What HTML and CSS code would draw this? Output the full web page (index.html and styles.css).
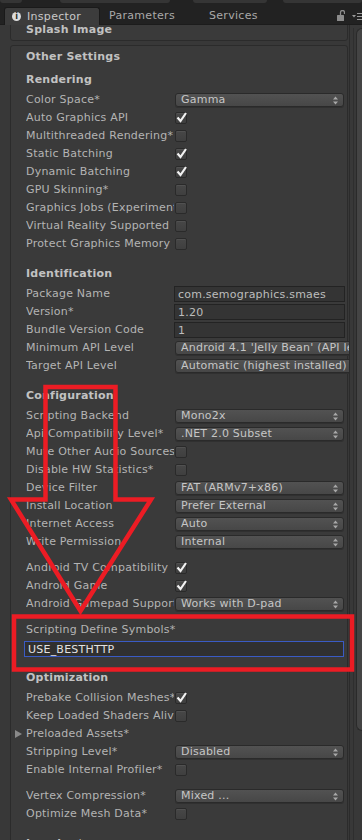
FILE: index.html
```html
<!DOCTYPE html>
<html>
<head>
<meta charset="utf-8">
<link rel="stylesheet" href="styles.css">
</head>
<body>
<div class="window">
  <div class="topbar">
    <div class="strip">
      <span class="piece p1"></span><span class="piece p2"></span><span class="piece p3"></span><span class="piece p4"></span>
    </div>
    <div class="tabs">
      <div class="tab active"><span class="info">i</span>Inspector</div>
      <div class="tab">Parameters</div>
      <div class="tab">Services</div>
      <div class="tools">
        <svg class="lock" width="8" height="11" viewBox="0 0 8 11"><path d="M3.5 5V2.5a2 2 0 0 1 4 0V4" fill="none" stroke="#8c8c8c" stroke-width="1.3"/><rect x="0" y="5" width="7" height="6" rx="0.5" fill="#8c8c8c"/></svg>
        <svg class="menu" width="10" height="7" viewBox="0 0 10 7"><path d="M0 2h4L2 4.5z" fill="#9a9a9a"/><path d="M5 0.5h5M5 3.5h5M5 6.5h5" stroke="#9a9a9a" stroke-width="1"/></svg>
      </div>
    </div>
  </div>
  <div class="main">
    <div class="content">
      <div class="panel splash"><div class="panel-header">Splash Image</div></div>
      <div class="panel other">
        <div class="panel-header">Other Settings</div>
        <div class="panel-body">
          <div class="section">
            <div class="heading">Rendering</div>
            <div class="row"><span class="label">Color Space*</span><div class="popup"><span class="ptext">Gamma</span><svg class="arr" width="5" height="9" viewBox="0 0 5 9"><path d="M0 3.5L2.5 0.5 5 3.5zM0 5.5h5L2.5 8.5z" fill="#a8a8a8"/></svg></div></div>
            <div class="row"><span class="label">Auto Graphics API</span><span class="check on"><svg width="12" height="12" viewBox="0 0 12 12"><path d="M2.5 5.5l3 3.5 5.5-8" fill="none" stroke="#f2f2f2" stroke-width="2.2"/></svg></span></div>
            <div class="row"><span class="label">Multithreaded Rendering*</span><span class="check"></span></div>
            <div class="row"><span class="label">Static Batching</span><span class="check on"><svg width="12" height="12" viewBox="0 0 12 12"><path d="M2.5 5.5l3 3.5 5.5-8" fill="none" stroke="#f2f2f2" stroke-width="2.2"/></svg></span></div>
            <div class="row"><span class="label">Dynamic Batching</span><span class="check on"><svg width="12" height="12" viewBox="0 0 12 12"><path d="M2.5 5.5l3 3.5 5.5-8" fill="none" stroke="#f2f2f2" stroke-width="2.2"/></svg></span></div>
            <div class="row"><span class="label">GPU Skinning*</span><span class="check"></span></div>
            <div class="row"><span class="label">Graphics Jobs (Experimental)</span><span class="check"></span></div>
            <div class="row"><span class="label">Virtual Reality Supported</span><span class="check"></span></div>
            <div class="row"><span class="label">Protect Graphics Memory</span><span class="check"></span></div>
          </div>
          <div class="section">
            <div class="heading">Identification</div>
            <div class="row"><span class="label">Package Name</span><div class="tfield">com.semographics.smaes</div></div>
            <div class="row"><span class="label">Version*</span><div class="tfield">1.20</div></div>
            <div class="row"><span class="label">Bundle Version Code</span><div class="tfield">1</div></div>
            <div class="row"><span class="label">Minimum API Level</span><div class="popup"><span class="ptext">Android 4.1 'Jelly Bean' (API level 16)</span><svg class="arr" width="5" height="9" viewBox="0 0 5 9"><path d="M0 3.5L2.5 0.5 5 3.5zM0 5.5h5L2.5 8.5z" fill="#a8a8a8"/></svg></div></div>
            <div class="row"><span class="label">Target API Level</span><div class="popup"><span class="ptext">Automatic (highest installed)</span><svg class="arr" width="5" height="9" viewBox="0 0 5 9"><path d="M0 3.5L2.5 0.5 5 3.5zM0 5.5h5L2.5 8.5z" fill="#a8a8a8"/></svg></div></div>
          </div>
          <div class="section">
            <div class="heading">Configuration</div>
            <div class="row"><span class="label">Scripting Backend</span><div class="popup"><span class="ptext">Mono2x</span><svg class="arr" width="5" height="9" viewBox="0 0 5 9"><path d="M0 3.5L2.5 0.5 5 3.5zM0 5.5h5L2.5 8.5z" fill="#a8a8a8"/></svg></div></div>
            <div class="row"><span class="label">Api Compatibility Level*</span><div class="popup"><span class="ptext">.NET 2.0 Subset</span><svg class="arr" width="5" height="9" viewBox="0 0 5 9"><path d="M0 3.5L2.5 0.5 5 3.5zM0 5.5h5L2.5 8.5z" fill="#a8a8a8"/></svg></div></div>
            <div class="row"><span class="label">Mute Other Audio Sources*</span><span class="check"></span></div>
            <div class="row"><span class="label">Disable HW Statistics*</span><span class="check"></span></div>
            <div class="row"><span class="label">Device Filter</span><div class="popup"><span class="ptext">FAT (ARMv7+x86)</span><svg class="arr" width="5" height="9" viewBox="0 0 5 9"><path d="M0 3.5L2.5 0.5 5 3.5zM0 5.5h5L2.5 8.5z" fill="#a8a8a8"/></svg></div></div>
            <div class="row"><span class="label">Install Location</span><div class="popup"><span class="ptext">Prefer External</span><svg class="arr" width="5" height="9" viewBox="0 0 5 9"><path d="M0 3.5L2.5 0.5 5 3.5zM0 5.5h5L2.5 8.5z" fill="#a8a8a8"/></svg></div></div>
            <div class="row"><span class="label">Internet Access</span><div class="popup"><span class="ptext">Auto</span><svg class="arr" width="5" height="9" viewBox="0 0 5 9"><path d="M0 3.5L2.5 0.5 5 3.5zM0 5.5h5L2.5 8.5z" fill="#a8a8a8"/></svg></div></div>
            <div class="row"><span class="label">Write Permission</span><div class="popup"><span class="ptext">Internal</span><svg class="arr" width="5" height="9" viewBox="0 0 5 9"><path d="M0 3.5L2.5 0.5 5 3.5zM0 5.5h5L2.5 8.5z" fill="#a8a8a8"/></svg></div></div>
            <div class="group">
              <div class="row"><span class="label">Android TV Compatibility</span><span class="check on"><svg width="12" height="12" viewBox="0 0 12 12"><path d="M2.5 5.5l3 3.5 5.5-8" fill="none" stroke="#f2f2f2" stroke-width="2.2"/></svg></span></div>
              <div class="row"><span class="label">Android Game</span><span class="check on"><svg width="12" height="12" viewBox="0 0 12 12"><path d="M2.5 5.5l3 3.5 5.5-8" fill="none" stroke="#f2f2f2" stroke-width="2.2"/></svg></span></div>
              <div class="row"><span class="label">Android Gamepad Support Level</span><div class="popup"><span class="ptext">Works with D-pad</span><svg class="arr" width="5" height="9" viewBox="0 0 5 9"><path d="M0 3.5L2.5 0.5 5 3.5zM0 5.5h5L2.5 8.5z" fill="#a8a8a8"/></svg></div></div>
            </div>
            <div class="group">
              <div class="row single"><span class="label wide">Scripting Define Symbols*</span></div>
              <div class="row single"><div class="deffield">USE_BESTHTTP</div></div>
            </div>
          </div>
          <div class="section">
            <div class="heading">Optimization</div>
            <div class="row"><span class="label">Prebake Collision Meshes*</span><span class="check on"><svg width="12" height="12" viewBox="0 0 12 12"><path d="M2.5 5.5l3 3.5 5.5-8" fill="none" stroke="#f2f2f2" stroke-width="2.2"/></svg></span></div>
            <div class="row"><span class="label">Keep Loaded Shaders Alive*</span><span class="check"></span></div>
            <div class="row fold"><span class="tri"></span><span class="label wide">Preloaded Assets*</span></div>
            <div class="row"><span class="label">Stripping Level*</span><div class="popup"><span class="ptext">Disabled</span><svg class="arr" width="5" height="9" viewBox="0 0 5 9"><path d="M0 3.5L2.5 0.5 5 3.5zM0 5.5h5L2.5 8.5z" fill="#a8a8a8"/></svg></div></div>
            <div class="row"><span class="label">Enable Internal Profiler*</span><span class="check"></span></div>
            <div class="group">
              <div class="row"><span class="label">Vertex Compression*</span><div class="popup"><span class="ptext">Mixed ...</span><svg class="arr" width="5" height="9" viewBox="0 0 5 9"><path d="M0 3.5L2.5 0.5 5 3.5zM0 5.5h5L2.5 8.5z" fill="#a8a8a8"/></svg></div></div>
              <div class="row"><span class="label">Optimize Mesh Data*</span><span class="check"></span></div>
            </div>
          </div>
          <div class="section">
            <div class="heading">Logging*</div>
          </div>
        </div>
      </div>
    </div>
    <div class="scrollbar"><div class="track"><div class="thumb"></div></div></div>
  </div>
</div>
<svg class="annot" width="362" height="840" viewBox="0 0 362 840">
  <polygon points="45.5,387 115.5,387 115.5,499.5 151,499.5 80.5,611 11,499.5 45.5,499.5" fill="none" stroke="#ec1c24" stroke-width="4.5" stroke-linejoin="miter"/>
  <rect x="14" y="616.5" width="338" height="53" fill="none" stroke="#ec1c24" stroke-width="4.5"/>
</svg>
</body>
</html>
```

FILE: styles.css
```css
* { box-sizing: border-box; }
html, body { margin: 0; padding: 0; }
body {
  width: 362px;
  height: 840px;
  overflow: hidden;
  position: relative;
  background: #383838;
  font-family: "DejaVu Sans", "Noto Sans", sans-serif;
  font-size: 11px;
  letter-spacing: 0.22px;
  color: #b4b4b4;
}
.window { display: flex; flex-direction: column; height: 840px; }

/* top tab bar */
.topbar { height: 25px; flex: none; background: #222222; position: relative; z-index: 2; border-bottom: 1px solid #1c1c1c; }
.strip { height: 3px; display: flex; }
.piece { height: 3px; background: #353535; border-radius: 0 0 3px 3px; }
.p1 { width: 22px; }
.p2 { width: 110px; margin-left: 38px; }
.p3 { width: 74px; margin-left: 23px; }
.p4 { width: 79px; margin-left: 16px; }
.tabs { height: 21px; display: flex; align-items: flex-end; }
.tab { height: 17px; line-height: 18px; color: #a9a9a9; white-space: nowrap; letter-spacing: 0.3px; }
.tab.active {
  margin-left: 4px; width: 96px; padding-left: 7px;
  background: #3c3c3c; color: #c9c9c9;
  border: 1px solid #1a1a1a; border-bottom: none; border-radius: 3px 3px 0 0;
  display: flex; align-items: center; gap: 6px;
  height: 18px; margin-bottom: -1px;
}
.info {
  width: 9px; height: 9px; border-radius: 50%; background: #dcdcdc; color: #2a2a2a;
  font-size: 8px; font-weight: bold; line-height: 9px; text-align: center; flex: none; letter-spacing: 0;
}
.tab:nth-child(2) { width: 100px; padding-left: 9px; }
.tab:nth-child(3) { width: 100px; padding-left: 9px; }
.tools { margin-left: auto; display: flex; align-items: flex-end; height: 21px; padding-bottom: 3px; }
.lock { margin-right: 7px; }
.menu { margin-bottom: 1px; }

/* main */
.main { flex: 1; display: flex; overflow: hidden; }
.content { width: 349px; flex: none; padding-left: 10px; overflow: hidden; }
.panel { width: 338px; background: #3a3a3a; border: 1px solid #2b2b2b; border-radius: 3px; }
.panel.splash { margin-top: -7px; }
.panel.other { margin-top: 4px; }
.panel-header { height: 21px; line-height: 22px; padding-left: 15px; font-weight: bold; color: #c1c1c1; }
.panel-body { padding: 4px 3px 0 15px; }

.section { margin-bottom: 12px; }
.heading { height: 18px; line-height: 18px; font-weight: bold; color: #c2c2c2; margin-bottom: 2px; }
.group { margin-top: 8px; }
.row { height: 18px; display: grid; grid-template-columns: 149px 1fr; align-items: center; }
.row.single { grid-template-columns: 1fr; }
.row.fold { grid-template-columns: 11px 1fr; margin-left: -11px; }
.label { white-space: nowrap; overflow: hidden; max-width: 148px; line-height: 18px; }
.label.wide { max-width: none; }
.tri {
  display: block; width: 0; height: 0;
  border-left: 7px solid #8a8a8a; border-top: 4px solid transparent; border-bottom: 4px solid transparent;
}

.popup {
  height: 14px; display: flex; align-items: center; padding: 0 5px 0 5px;
  background: linear-gradient(#525252, #474747);
  border: 1px solid #2a2a2a; border-radius: 3px;
  box-shadow: 0 1px 0 #303030;
  color: #c6c6c6; line-height: 12px;
}
.ptext { flex: 1; white-space: nowrap; overflow: hidden; }
.arr { flex: none; margin-left: 3px; }

.tfield {
  height: 16px; margin-left: -1px; width: 171px; padding-left: 3px; line-height: 15px;
  background: #343434; border: 1px solid #232323; color: #bdbdbd; white-space: nowrap; overflow: hidden;
}
.deffield {
  height: 16px; margin-left: -2px; width: 320px; padding-left: 3px; line-height: 15px; margin-top: 1px;
  background: #303030; border: 1px solid #3a5bc4; color: #e2e2e2;
}

.check {
  width: 12px; height: 12px; display: block;
  background: linear-gradient(#474747, #3f3f3f);
  border: 1px solid #2a2a2a; border-radius: 2px;
  box-shadow: inset 0 1px 0 #515151;
  position: relative;
}
.check svg { position: absolute; left: -1px; top: -1px; }

/* scrollbar */
.scrollbar { width: 13px; flex: none; border-left: 1px solid #2b2b2b; padding-left: 3px; background: #383838; }
.track { height: 100%; border-left: 1px solid #2e2e2e; padding-left: 2px; }
.thumb { margin-top: 3px; height: 703px; width: 6px; background: #444444; border: 1px solid #2a2a2a; border-right: none; border-radius: 6px 0 0 6px; }

.annot { position: absolute; left: 0; top: 0; z-index: 10; pointer-events: none; }
```
